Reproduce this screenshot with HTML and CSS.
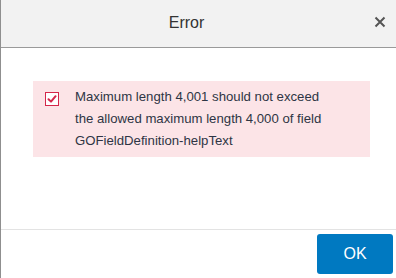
FILE: index.html
```html
<!DOCTYPE html>
<html lang="en">
<head>
    <meta charset="UTF-8">
    <title>Error</title>
    <link rel="stylesheet" href="styles.css">
</head>
<body>
    <div class="dialog">
        <div class="dialog-header">
            <span class="dialog-title">Error</span>
            <button class="close-btn" aria-label="Close">
                <svg width="12" height="12" viewBox="0 0 12 12">
                    <path d="M1.5 1.5 L10.5 10.5 M10.5 1.5 L1.5 10.5" stroke="#555" stroke-width="2" fill="none"/>
                </svg>
            </button>
        </div>
        <div class="dialog-body">
            <div class="alert">
                <span class="alert-icon">
                    <svg width="14" height="14" viewBox="0 0 14 14">
                        <rect x="0.5" y="0.5" width="13" height="13" fill="#fff" stroke="#d4264a" stroke-width="1"/>
                        <path d="M3.5 7.2 L6 9.6 L10.6 4.2" stroke="#d4264a" stroke-width="2" fill="none" stroke-linecap="round" stroke-linejoin="round"/>
                    </svg>
                </span>
                <p class="alert-text">Maximum length 4,001 should not exceed the allowed maximum length 4,000 of field GOFieldDefinition-helpText</p>
            </div>
        </div>
        <div class="dialog-footer">
            <button class="ok-btn">OK</button>
        </div>
    </div>
</body>
</html>
```

FILE: styles.css
```css
body {
    margin: 0;
    font-family: Arial, "Liberation Sans", sans-serif;
    background-color: #fff;
}
.dialog {
    width: 396px;
    height: 278px;
    border-left: 1px solid #8f8f8f;
    box-sizing: border-box;
    display: flex;
    flex-direction: column;
}
.dialog-header {
    height: 48px;
    background-color: #f2f2f2;
    border-bottom: 1px solid #9a9a9a;
    display: flex;
    align-items: center;
    justify-content: center;
    position: relative;
    box-sizing: border-box;
}
.dialog-title {
    font-size: 16px;
    color: #333;
    margin-left: -24px;
    margin-top: -2px;
}
.close-btn {
    position: absolute;
    right: 10px;
    top: 16px;
    background: none;
    border: none;
    padding: 0;
    width: 12px;
    height: 12px;
    cursor: pointer;
    display: flex;
}
.dialog-body {
    height: 182px;
    padding: 33px 26px 0 32px;
    box-sizing: border-box;
    border-bottom: 1px solid #e3e3e3;
}
.alert {
    background-color: #fce4e7;
    display: flex;
    align-items: flex-start;
    padding: 5px 10px 5px 12px;
}
.alert-icon {
    display: flex;
    margin-top: 6px;
    margin-right: 16px;
}
.alert-text {
    margin: 0;
    font-size: 13.2px;
    line-height: 22px;
    color: #2e3544;
    width: 250px;
}
.dialog-footer {
    flex: 1;
    display: flex;
    justify-content: flex-end;
    align-items: center;
    padding-right: 3px;
}
.ok-btn {
    background-color: #0079c1;
    color: #fff;
    border: none;
    border-radius: 3px;
    width: 76px;
    height: 40px;
    font-size: 16px;
    font-family: Arial, "Liberation Sans", sans-serif;
    cursor: pointer;
}
```
